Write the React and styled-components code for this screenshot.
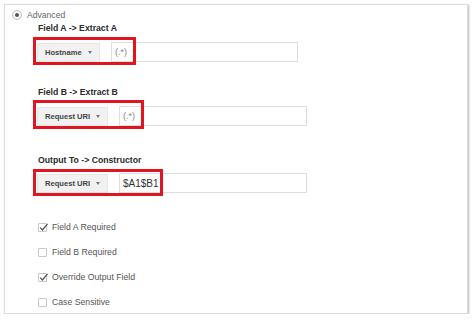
import React from 'react'
import styled, { createGlobalStyle } from 'styled-components'

const GlobalStyle = createGlobalStyle`
  html, body {
    margin: 0;
    padding: 0;
    background: #ffffff;
  }
  body {
    font-family: "Liberation Sans", Arial, sans-serif;
  }
`

const Panel = styled.div`
  box-sizing: border-box;
  margin: 4px 0 0 4px;
  width: 464px;
  height: 310px;
  border: 1px solid #dcdcdc;
  box-shadow: 1px 1px 2px rgba(0, 0, 0, 0.28);
  background: #fff;
  padding: 4px 0 0 7px;
  display: flex;
  flex-direction: column;
`

const RadioRow = styled.label`
  display: flex;
  align-items: center;
  gap: 5px;
  height: 12px;
  font-size: 8.6px;
  color: #666;
`

const Radio = styled.span`
  box-sizing: border-box;
  width: 10px;
  height: 10px;
  border-radius: 50%;
  border: 1px solid #bdbdbd;
  background: #fafafa;
  display: flex;
  align-items: center;
  justify-content: center;

  &::after {
    content: '';
    width: 4px;
    height: 4px;
    border-radius: 50%;
    background: #555;
  }
`

const Form = styled.div`
  display: flex;
  flex-direction: column;
  padding-left: 21px;
`

const FieldLabel = styled.div`
  padding-left: 5px;
  height: 12px;
  line-height: 12px;
  margin-top: ${p => p.$top}px;
  font-size: 8.7px;
  font-weight: bold;
  color: #2a2a2a;
`

const Row = styled.div`
  position: relative;
  display: flex;
  align-items: center;
  gap: 11px;
  height: 20px;
  padding-left: 4px;
  margin-top: ${p => p.$top}px;
`

const Highlight = styled.div`
  position: absolute;
  left: 0;
  top: ${p => p.$top}px;
  bottom: -3px;
  width: ${p => p.$width}px;
  box-sizing: border-box;
  border: 3px solid #e0151f;
  pointer-events: none;
`

const Select = styled.div`
  box-sizing: border-box;
  width: ${p => p.$width}px;
  height: 19px;
  padding: 0 7px;
  display: flex;
  align-items: center;
  justify-content: space-between;
  background: #f1f1f1;
  border: 1px solid #e6e6e6;
  font-size: 7.6px;
  font-weight: bold;
  color: #444;
`

const Caret = styled.span`
  width: 0;
  height: 0;
  border-left: 2.5px solid transparent;
  border-right: 2.5px solid transparent;
  border-top: 3px solid #777;
  margin-top: 1px;
`

const TextInput = styled.div`
  box-sizing: border-box;
  width: ${p => p.$width}px;
  height: 20px;
  padding: 0 3px;
  display: flex;
  align-items: center;
  background: #fff;
  border: 1px solid #dedede;
  font-size: ${p => (p.$dark ? '10px' : '9px')};
  color: ${p => (p.$dark ? '#333' : '#888')};
`

const Checks = styled.div`
  display: flex;
  flex-direction: column;
  gap: 13px;
  margin-top: 28px;
  padding-left: 5px;
`

const CheckRow = styled.label`
  display: flex;
  align-items: center;
  gap: 5px;
  height: 12px;
  font-size: 8.7px;
  color: #555;
`

const Box = styled.span`
  position: relative;
  box-sizing: border-box;
  width: 9px;
  height: 9px;
  border: 1px solid #c8c8c8;
  border-radius: 1px;
  background: #fff;

  svg {
    position: absolute;
    left: 0;
    top: -2px;
  }
`

function Check({ checked, children }) {
  return (
    <CheckRow>
      <Box>
        {checked && (
          <svg width="10" height="10" viewBox="0 0 10 10">
            <polyline points="1.2,5.6 3.4,8 8.6,1.8" fill="none" stroke="#555" strokeWidth="1.3" />
          </svg>
        )}
      </Box>
      {children}
    </CheckRow>
  )
}

function FieldRow({ top, hlTop, hlWidth, select, selectWidth, value, inputWidth, dark }) {
  return (
    <Row $top={top}>
      <Select $width={selectWidth}>
        {select}
        <Caret />
      </Select>
      <TextInput $width={inputWidth} $dark={dark}>{value}</TextInput>
      <Highlight $top={hlTop} $width={hlWidth} />
    </Row>
  )
}

export default function App() {
  return (
    <>
      <GlobalStyle />
      <Panel>
        <RadioRow>
          <Radio />
          Advanced
        </RadioRow>
        <Form>
          <FieldLabel $top={1}>Field A -&gt; Extract A</FieldLabel>
          <FieldRow top={8} hlTop={-5} hlWidth={103} select="Hostname" selectWidth={63} value="(.*)" inputWidth={187} />

          <FieldLabel $top={24}>Field B -&gt; Extract B</FieldLabel>
          <FieldRow top={8} hlTop={-6} hlWidth={111} select="Request URI" selectWidth={71} value="(.*)" inputWidth={188} />

          <FieldLabel $top={28}>Output To -&gt; Constructor</FieldLabel>
          <FieldRow top={7} hlTop={-4} hlWidth={130} select="Request URI" selectWidth={71} value="$A1$B1" inputWidth={188} dark />

          <Checks>
            <Check checked>Field A Required</Check>
            <Check>Field B Required</Check>
            <Check checked>Override Output Field</Check>
            <Check>Case Sensitive</Check>
          </Checks>
        </Form>
      </Panel>
    </>
  )
}
